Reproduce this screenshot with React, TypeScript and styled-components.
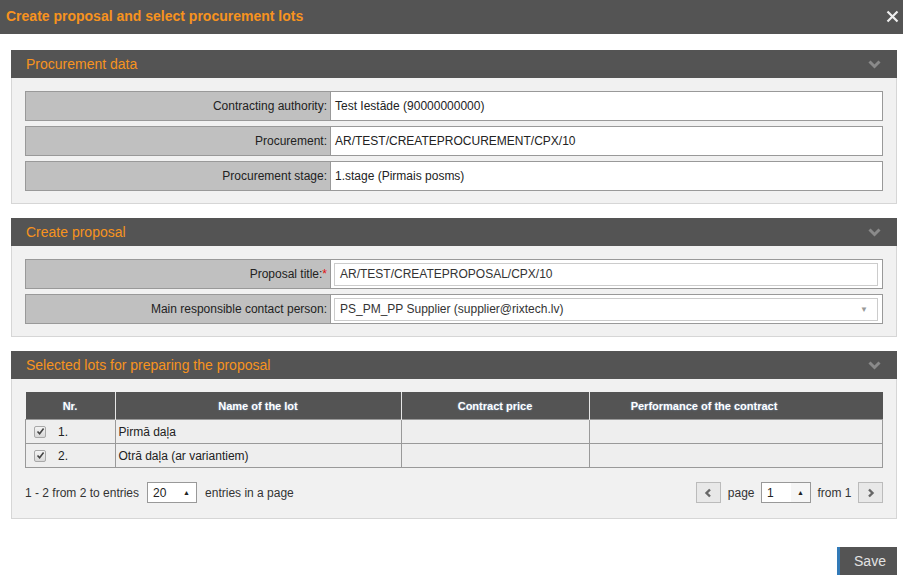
import styled, { createGlobalStyle } from 'styled-components';

const GlobalStyle = createGlobalStyle`
    html, body {
        margin: 0;
        padding: 0;
        background: #ffffff;
    }
    body {
        font-family: "Liberation Sans", Arial, sans-serif;
        font-size: 12px;
        color: #222;
    }
`;

const Dialog = styled.div`
    width: 903px;
    height: 579px;
    display: flex;
    flex-direction: column;
    background: #fff;
    overflow: hidden;
`;

const TitleBar = styled.header`
    height: 34px;
    flex-shrink: 0;
    display: flex;
    align-items: center;
    justify-content: space-between;
    padding: 0 4px 2px 6px;
    box-sizing: border-box;
    background: #545454;
`;

const Title = styled.h1`
    margin: 0;
    font-size: 14px;
    font-weight: bold;
    color: #f7931e;
`;

const CloseButton = styled.button`
    display: flex;
    padding: 0;
    border: 0;
    background: none;
    cursor: pointer;
`;

const Content = styled.div`
    padding: 16px 6px 0 11px;
    display: flex;
    flex-direction: column;
`;

const Panel = styled.section`
    margin-bottom: 14px;
`;

const PanelHeader = styled.div`
    height: 28px;
    display: flex;
    align-items: center;
    justify-content: space-between;
    padding: 0 16px 0 15px;
    background: #545454;
    color: #f7931e;
    font-size: 14px;
`;

const PanelBody = styled.div`
    padding: 13px 13px 12px 13px;
    background: #f1f1f1;
    border: 1px solid #d6d6d6;
    border-top: 0;
`;

const FieldRow = styled.div`
    display: grid;
    grid-template-columns: 305px 1fr;
    height: 30px;
    box-sizing: border-box;
    border: 1px solid #999;
    margin-bottom: 5px;
    &:last-child {
        margin-bottom: 0;
    }
`;

const Label = styled.div`
    display: flex;
    align-items: center;
    justify-content: flex-end;
    padding-right: 3px;
    background: #c0c0c0;
    border-right: 1px solid #999;
    color: #222;
`;

const Required = styled.span`
    color: #e01010;
`;

const Value = styled.div<{ $pad?: boolean }>`
    display: flex;
    align-items: center;
    padding: ${p => (p.$pad ? '2px 4px 2px 3px' : '0 4px')};
    background: #fff;
    color: #222;
`;

const TextInput = styled.div`
    flex: 1;
    height: 23px;
    box-sizing: border-box;
    display: flex;
    align-items: center;
    justify-content: space-between;
    padding: 0 5px;
    border: 1px solid #ccc;
    background: #fff;
    color: #333;
`;

const Caret = styled.span`
    font-size: 8px;
    color: #999;
    padding-right: 4px;
`;

const Table = styled.table`
    width: 100%;
    border-collapse: collapse;
    table-layout: fixed;
`;

const HeadCell = styled.th<{ $w?: number; $shift?: number }>`
    width: ${p => (p.$w ? `${p.$w}px` : 'auto')};
    height: 27px;
    padding: 0 ${p => p.$shift ?? 0}px 0 0;
    background: #545454;
    color: #fff;
    font-size: 11px;
    font-weight: bold;
    text-align: center;
    text-shadow: 0 0 2px rgba(150, 200, 255, 0.6);
    border-left: 1px solid #e6e6e6;
    &:first-child {
        border-left: 0;
    }
`;

const Cell = styled.td`
    height: 23px;
    padding: 0 3px;
    background: #eeeeee;
    border: 1px solid #999;
    color: #222;
    font-size: 12px;
`;

const NrCell = styled.div`
    display: flex;
    align-items: center;
    gap: 12px;
    padding-left: 5px;
`;

const CheckBox = styled.span`
    width: 12px;
    height: 12px;
    box-sizing: border-box;
    display: inline-flex;
    align-items: center;
    justify-content: center;
    border: 1px solid #a8a8a8;
    border-radius: 2px;
    background: linear-gradient(#f4f4f4, #d8d8d8);
`;

const Footer = styled.div`
    display: flex;
    align-items: center;
    justify-content: space-between;
    margin: 14px 0 3px;
    height: 21px;
`;

const FooterGroup = styled.div<{ $gap: number }>`
    display: flex;
    align-items: center;
    gap: ${p => p.$gap}px;
    color: #333;
`;

const SpinBox = styled.div<{ $w: number }>`
    width: ${p => p.$w}px;
    height: 21px;
    box-sizing: border-box;
    display: flex;
    align-items: center;
    justify-content: space-between;
    padding-left: 5px;
    border: 1px solid #999;
    background: #fff;
    color: #222;
    font-size: 12px;
`;

const SpinArrow = styled.span<{ $shade?: boolean }>`
    width: 19px;
    height: 100%;
    display: flex;
    align-items: center;
    justify-content: center;
    background: ${p => (p.$shade ? '#f6f6f6' : 'transparent')};
    font-size: 7px;
    color: #222;
`;

const PagerButton = styled.button`
    width: 25px;
    height: 21px;
    padding: 0;
    display: flex;
    align-items: center;
    justify-content: center;
    border: 1px solid #bbb;
    background: #e8e8e8;
    cursor: pointer;
`;

const Actions = styled.div`
    display: flex;
    justify-content: flex-end;
    margin-top: 14px;
`;

const SaveButton = styled.button`
    width: 60px;
    height: 28px;
    padding: 0 0 0 3px;
    border: 0;
    border-left: 3px solid #337ab7;
    background: #545454;
    color: #e2e2e2;
    font-family: "Liberation Sans", Arial, sans-serif;
    font-size: 14px;
    cursor: pointer;
`;

function Chevron() {
    return (
        <svg width="13" height="9" viewBox="0 0 13 9">
            <path d="M1.5 1.5 L6.5 6.5 L11.5 1.5" fill="none" stroke="#8a8a8a" strokeWidth="3" />
        </svg>
    );
}

function Check() {
    return (
        <svg width="9" height="9" viewBox="0 0 9 9">
            <path d="M1.5 4.5 L3.6 6.8 L7.6 1.6" fill="none" stroke="#444" strokeWidth="1.6" />
        </svg>
    );
}

function Arrow({ dir }: { dir: 'left' | 'right' }) {
    const d = dir === 'left' ? 'M6 1.5 L2.5 5 L6 8.5' : 'M3 1.5 L6.5 5 L3 8.5';
    return (
        <svg width="9" height="10" viewBox="0 0 9 10">
            <path d={d} fill="none" stroke="#666" strokeWidth="2.4" />
        </svg>
    );
}

const procurementRows = [
    { label: 'Contracting authority:', value: 'Test Iestāde (90000000000)' },
    { label: 'Procurement:', value: 'AR/TEST/CREATEPROCUREMENT/CPX/10' },
    { label: 'Procurement stage:', value: '1.stage (Pirmais posms)' },
];

const lots = [
    { nr: '1.', name: 'Pirmā daļa' },
    { nr: '2.', name: 'Otrā daļa (ar variantiem)' },
];

function App() {
    return (
        <Dialog>
            <GlobalStyle />
            <TitleBar>
                <Title>Create proposal and select procurement lots</Title>
                <CloseButton aria-label="close">
                    <svg width="13" height="13" viewBox="0 0 13 13">
                        <path d="M1.5 1.5 L11.5 11.5 M11.5 1.5 L1.5 11.5" stroke="#eeeeee" strokeWidth="2.2" />
                    </svg>
                </CloseButton>
            </TitleBar>
            <Content>
                <Panel>
                    <PanelHeader>
                        Procurement data
                        <Chevron />
                    </PanelHeader>
                    <PanelBody>
                        {procurementRows.map(row => (
                            <FieldRow key={row.label}>
                                <Label>{row.label}</Label>
                                <Value>{row.value}</Value>
                            </FieldRow>
                        ))}
                    </PanelBody>
                </Panel>

                <Panel>
                    <PanelHeader>
                        Create proposal
                        <Chevron />
                    </PanelHeader>
                    <PanelBody>
                        <FieldRow>
                            <Label>
                                Proposal title:<Required>*</Required>
                            </Label>
                            <Value $pad>
                                <TextInput>AR/TEST/CREATEPROPOSAL/CPX/10</TextInput>
                            </Value>
                        </FieldRow>
                        <FieldRow>
                            <Label>Main responsible contact person:</Label>
                            <Value $pad>
                                <TextInput>
                                    PS_PM_PP Supplier (supplier@rixtech.lv)
                                    <Caret>▼</Caret>
                                </TextInput>
                            </Value>
                        </FieldRow>
                    </PanelBody>
                </Panel>

                <Panel>
                    <PanelHeader>
                        Selected lots for preparing the proposal
                        <Chevron />
                    </PanelHeader>
                    <PanelBody>
                        <Table>
                            <thead>
                                <tr>
                                    <HeadCell $w={89}>Nr.</HeadCell>
                                    <HeadCell $w={285}>Name of the lot</HeadCell>
                                    <HeadCell $w={187}>Contract price</HeadCell>
                                    <HeadCell $shift={64}>Performance of the contract</HeadCell>
                                </tr>
                            </thead>
                            <tbody>
                                {lots.map(lot => (
                                    <tr key={lot.nr}>
                                        <Cell>
                                            <NrCell>
                                                <CheckBox>
                                                    <Check />
                                                </CheckBox>
                                                {lot.nr}
                                            </NrCell>
                                        </Cell>
                                        <Cell>{lot.name}</Cell>
                                        <Cell />
                                        <Cell />
                                    </tr>
                                ))}
                            </tbody>
                        </Table>
                        <Footer>
                            <FooterGroup $gap={8}>
                                1 - 2 from 2 to entries
                                <SpinBox $w={50}>
                                    20
                                    <SpinArrow>▲</SpinArrow>
                                </SpinBox>
                                entries in a page
                            </FooterGroup>
                            <FooterGroup $gap={6.5}>
                                <PagerButton aria-label="previous">
                                    <Arrow dir="left" />
                                </PagerButton>
                                page
                                <SpinBox $w={50}>
                                    1
                                    <SpinArrow $shade>▲</SpinArrow>
                                </SpinBox>
                                from 1
                                <PagerButton aria-label="next">
                                    <Arrow dir="right" />
                                </PagerButton>
                            </FooterGroup>
                        </Footer>
                    </PanelBody>
                </Panel>

                <Actions>
                    <SaveButton>Save</SaveButton>
                </Actions>
            </Content>
        </Dialog>
    );
}

export default App;
